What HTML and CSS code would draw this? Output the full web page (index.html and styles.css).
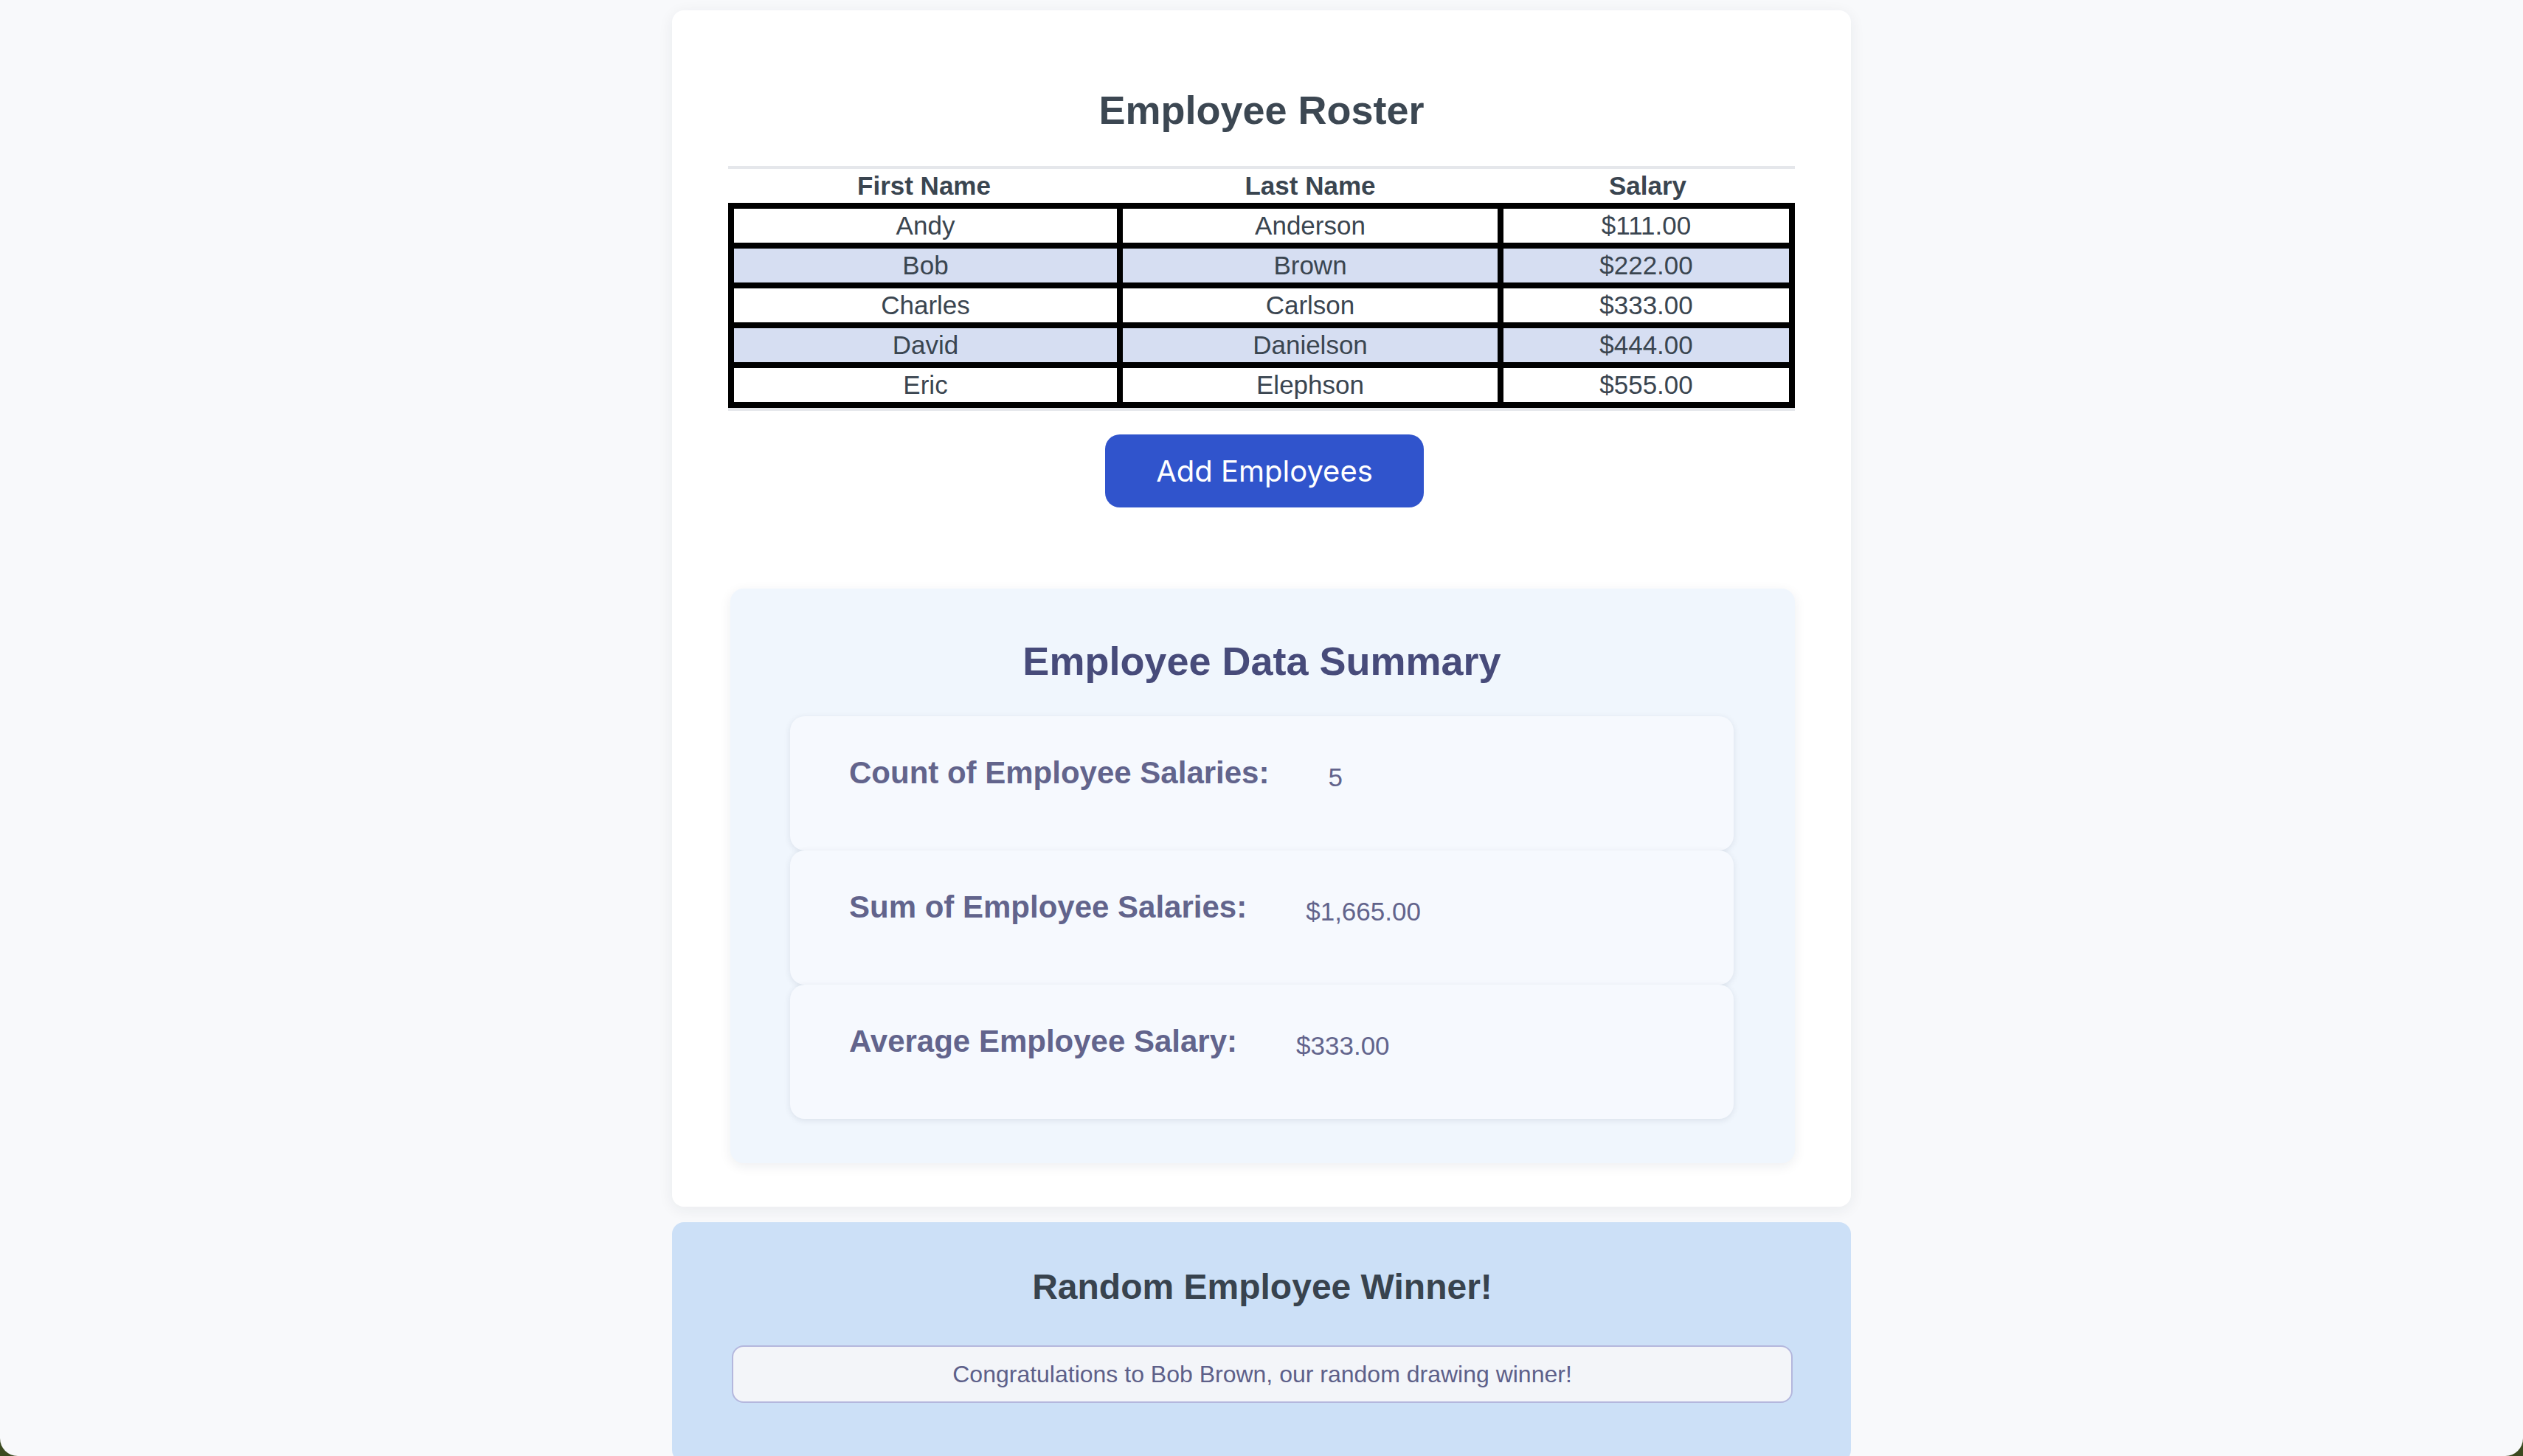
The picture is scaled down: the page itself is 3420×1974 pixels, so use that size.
FILE: index.html
```html
<!DOCTYPE html>
<html lang="en">
<head>
<meta charset="utf-8">
<title>Employee Roster</title>
<link rel="stylesheet" href="styles.css">
</head>
<body>
<div class="page">
  <main class="card">
    <h1 class="title">Employee Roster</h1>
    <table class="roster">
      <colgroup>
        <col class="c1"><col class="c2"><col class="c3">
      </colgroup>
      <thead>
        <tr><th>First Name</th><th>Last Name</th><th>Salary</th></tr>
      </thead>
      <tbody>
        <tr><td>Andy</td><td>Anderson</td><td>$111.00</td></tr>
        <tr><td>Bob</td><td>Brown</td><td>$222.00</td></tr>
        <tr><td>Charles</td><td>Carlson</td><td>$333.00</td></tr>
        <tr><td>David</td><td>Danielson</td><td>$444.00</td></tr>
        <tr><td>Eric</td><td>Elephson</td><td>$555.00</td></tr>
      </tbody>
    </table>
    <div class="actions">
      <button class="btn" type="button">Add Employees</button>
    </div>
    <section class="summary">
      <h2 class="summary-title">Employee Data Summary</h2>
      <div class="stat">
        <h3 class="stat-label">Count of Employee Salaries:</h3>
        <span class="stat-value">5</span>
      </div>
      <div class="stat">
        <h3 class="stat-label">Sum of Employee Salaries:</h3>
        <span class="stat-value">$1,665.00</span>
      </div>
      <div class="stat">
        <h3 class="stat-label">Average Employee Salary:</h3>
        <span class="stat-value">$333.00</span>
      </div>
    </section>
  </main>
  <section class="winner">
    <h2 class="winner-title">Random Employee Winner!</h2>
    <div class="winner-msg">Congratulations to Bob Brown, our random drawing winner!</div>
  </section>
</div>
</body>
</html>
```
FILE: styles.css
```css
html {
  background: #3b4a20;
  height: 100%;
}

body {
  margin: 0;
  height: 1974px;
  overflow: hidden;
  background: #f8f9fb;
  border-radius: 0 0 24px 24px;
  font-family: "Liberation Sans", Arial, Helvetica, sans-serif;
}

.page {
  width: 1598px;
  margin: 0 auto;
  padding-top: 14px;
}

.card {
  background: #ffffff;
  border-radius: 16px;
  box-shadow: 0 4px 20px rgba(30, 40, 60, 0.07);
  padding: 0 76px 59px 76px;
  display: flow-root;
}

.title {
  margin: 104px 0 0 0;
  font-size: 54px;
  line-height: 62px;
  font-weight: 700;
  text-align: center;
  color: #3c4752;
}

.roster {
  margin-top: 45px;
  width: 1446px;
  table-layout: fixed;
  border-collapse: separate;
  border-spacing: 0;
  border-top: 4px solid #e5e7eb;
  border-bottom: 4px solid #e5e7eb;
  color: #3a4550;
}

.c1 { width: 531px; }
.c2 { width: 516px; }
.c3 { width: 399px; }

.roster th {
  height: 46px;
  padding: 0;
  font-size: 35px;
  line-height: 40px;
  font-weight: 700;
  text-align: center;
}

.roster td {
  height: 46px;
  padding: 0;
  font-size: 35px;
  line-height: 40px;
  text-align: center;
  border: 4px solid #000;
  background: #ffffff;
}

.roster tbody tr:nth-child(even) td {
  background: #d6def2;
}

.roster tbody tr:first-child td { border-top-width: 8px; }
.roster tbody tr:last-child td { border-bottom-width: 8px; }
.roster td:first-child { border-left-width: 8px; }
.roster td:last-child { border-right-width: 8px; }

.actions {
  display: flex;
  justify-content: center;
  margin-top: 32px;
  padding-left: 8px;
}

.btn {
  width: 432px;
  height: 99px;
  border: none;
  border-radius: 20px;
  background: #3054cc;
  color: #ffffff;
  font-family: Inter, "Noto Sans", sans-serif;
  font-size: 40px;
  padding: 0;
}

.summary {
  margin: 110px 0 0 3px;
  background: #f0f6fd;
  border-radius: 18px;
  box-shadow: 0 4px 16px rgba(30, 40, 70, 0.08);
  padding: 67px 83px 60px 81px;
}

.summary-title {
  margin: 0 0 44px 0;
  font-size: 54px;
  line-height: 62px;
  font-weight: 700;
  text-align: center;
  color: #474b7a;
}

.stat {
  display: flex;
  align-items: flex-start;
  gap: 80px;
  height: 182px;
  box-sizing: border-box;
  padding: 53px 80px 0 80px;
  background: #f6f9fe;
  border-radius: 20px;
  box-shadow: 0 2px 8px rgba(30, 40, 70, 0.10);
  color: #62648c;
}

.stat-label {
  margin: 0;
  font-size: 42px;
  line-height: 48px;
  font-weight: 700;
}

.stat-value {
  margin-top: 10px;
  font-size: 35px;
  line-height: 40px;
}

.winner {
  margin-top: 21px;
  background: #cce0f7;
  border-radius: 16px;
  padding: 60px 79px 80px 81px;
}

.winner-title {
  margin: 0 0 52px 0;
  font-size: 48px;
  line-height: 55px;
  font-weight: 700;
  text-align: center;
  color: #38434e;
}

.winner-msg {
  border: 2px solid #b4b7dd;
  border-radius: 16px;
  background: #f3f5f9;
  padding: 18px 0;
  font-size: 32px;
  line-height: 38px;
  text-align: center;
  color: #5d6089;
}
```
